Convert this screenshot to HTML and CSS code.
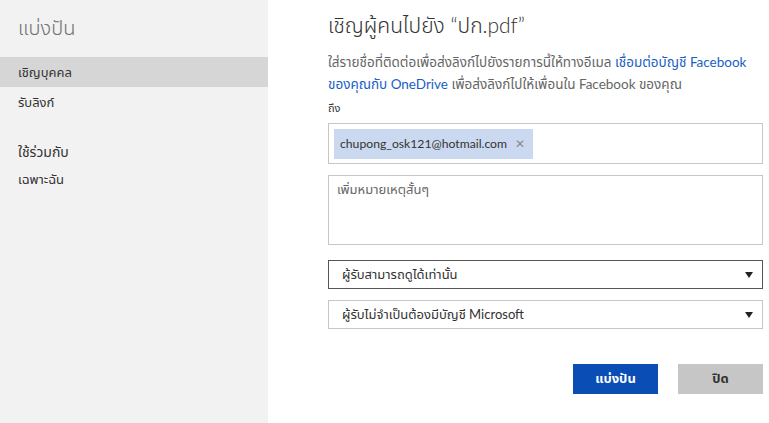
FILE: index.html
```html
<!DOCTYPE html>
<html lang="th">
<head>
    <meta charset="UTF-8">
    <meta name="viewport" content="width=device-width, initial-scale=1.0">
    <title>แบ่งปัน</title>
    <link rel="stylesheet" href="styles.css">
</head>
<body>
    <div class="page">
        <aside class="sidebar">
            <h2 class="side-title">แบ่งปัน</h2>
            <ul class="side-menu">
                <li class="active">เชิญบุคคล</li>
                <li>รับลิงก์</li>
            </ul>
            <h3 class="side-head">ใช้ร่วมกับ</h3>
            <ul class="side-menu">
                <li>เฉพาะฉัน</li>
            </ul>
        </aside>
        <main class="content">
            <h1>เชิญผู้คนไปยัง “ปก.pdf”</h1>
            <p class="intro">ใส่รายชื่อที่ติดต่อเพื่อส่งลิงก์ไปยังรายการนี้ให้ทางอีเมล <a href="#">เชื่อมต่อบัญชี Facebook ของคุณกับ OneDrive</a> เพื่อส่งลิงก์ไปให้เพื่อนใน Facebook ของคุณ</p>
            <label class="to-label">ถึง</label>
            <div class="to-box">
                <span class="chip">chupong_osk121@hotmail.com <span class="chip-x">&#x2715;</span></span>
            </div>
            <div class="note">เพิ่มหมายเหตุสั้นๆ</div>
            <div class="select dark">
                <span>ผู้รับสามารถดูได้เท่านั้น</span>
                <span class="arrow"></span>
            </div>
            <div class="select">
                <span>ผู้รับไม่จำเป็นต้องมีบัญชี Microsoft</span>
                <span class="arrow"></span>
            </div>
            <div class="buttons">
                <button class="btn primary">แบ่งปัน</button>
                <button class="btn">ปิด</button>
            </div>
        </main>
    </div>
</body>
</html>
```

FILE: styles.css
```css
/* Reset */
* {
  box-sizing: border-box;
  margin: 0;
  padding: 0;
}

body {
  font-family: "Segoe UI", "Lato", "Noto Sans Thai", "Noto Sans", sans-serif;
  background-color: #fff;
  color: #333;
}

.page {
  display: flex;
  height: 423px;
}

/* Sidebar */
.sidebar {
  width: 268px;
  background-color: #f2f2f2;
  padding-top: 14px;
}

.side-title {
  font-size: 20px;
  font-weight: 300;
  color: #707070;
  padding-left: 18px;
  height: 43px;
}

.side-menu {
  list-style-type: none;
}

.side-menu li {
  font-size: 13px;
  color: #333;
  padding-left: 18px;
  height: 30px;
  line-height: 30px;
}

.side-menu li.active {
  background-color: #d6d6d6;
}

.side-head {
  font-size: 14px;
  font-weight: normal;
  color: #333;
  padding-left: 18px;
  margin-top: 23px;
  height: 24px;
  line-height: 24px;
}

/* Main panel */
.content {
  flex: 1;
  padding: 12px 6px 0 60px;
}

h1 {
  font-size: 21px;
  font-weight: 300;
  color: #333;
  line-height: 26px;
  margin-bottom: 13px;
}

.intro {
  font-size: 13.5px;
  line-height: 22px;
  color: #666;
  margin-bottom: 3px;
}

.intro a {
  color: #1a5fc4;
  text-decoration: none;
}

.to-label {
  display: block;
  font-size: 11px;
  color: #333;
  line-height: 20px;
  margin-bottom: 5px;
}

.to-box {
  height: 41px;
  border: 1px solid #c6c6c6;
  padding: 5px;
  margin-bottom: 11px;
}

.chip {
  display: inline-block;
  height: 30px;
  line-height: 30px;
  padding: 0 8px 0 6px;
  background-color: #cbd9f0;
  font-size: 12.2px;
  color: #333;
}

.chip-x {
  color: #8a8a8a;
  font-size: 12px;
  margin-left: 5px;
}

.note {
  height: 70px;
  border: 1px solid #c6c6c6;
  padding: 4px 8px;
  font-size: 13px;
  color: #666;
  margin-bottom: 15px;
}

.select {
  display: flex;
  align-items: center;
  justify-content: space-between;
  height: 29px;
  border: 1px solid #c6c6c6;
  padding: 0 9px 0 13px;
  font-size: 13px;
  color: #333;
  margin-bottom: 11px;
}

.select.dark {
  border-color: #555;
}

.arrow {
  width: 0;
  height: 0;
  border-left: 4px solid transparent;
  border-right: 4px solid transparent;
  border-top: 6px solid #222;
}

.buttons {
  display: flex;
  justify-content: flex-end;
  gap: 20px;
  margin-top: 35px;
}

.btn {
  width: 85px;
  height: 30px;
  border: none;
  background-color: #c6c6c6;
  color: #333;
  font-family: inherit;
  font-size: 13px;
  font-weight: bold;
}

.btn.primary {
  background-color: #0a4db5;
  color: #fff;
}
```
